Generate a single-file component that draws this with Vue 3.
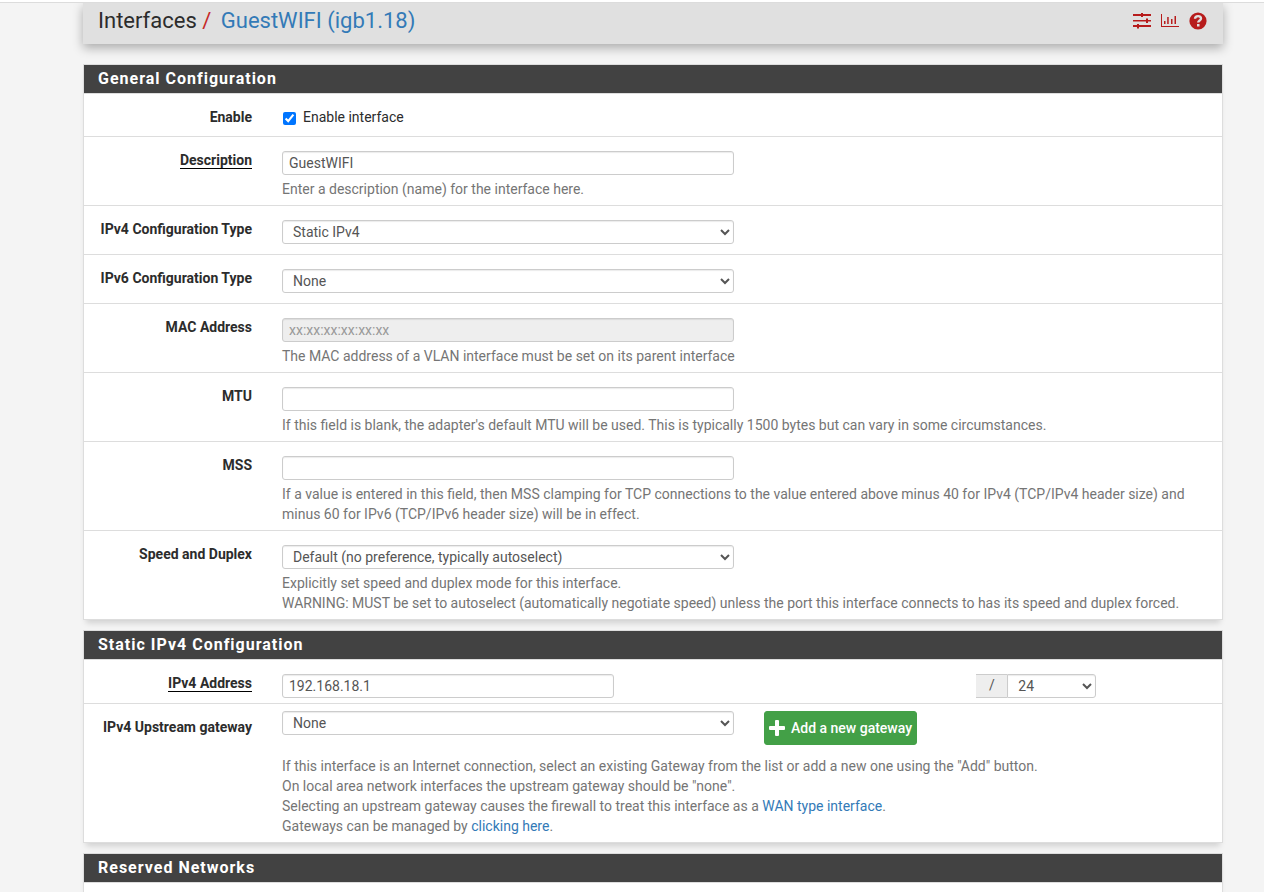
<script setup>
import { ref } from 'vue'

const enabled = ref(true)
const description = ref('GuestWIFI')
const ipv4Type = ref('Static IPv4')
const ipv6Type = ref('None')
const mtu = ref('')
const mss = ref('')
const speed = ref('Default (no preference, typically autoselect)')
const address = ref('192.168.18.1')
const prefix = ref('24')
const gateway = ref('None')
</script>

<template>
  <div class="page">
    <div class="topline"></div>
    <div class="container">
      <header class="page-header">
        <h1>Interfaces <span class="slash">/</span> <a href="#">GuestWIFI (igb1.18)</a></h1>
        <nav class="tools">
          <a href="#" aria-label="Related settings">
            <svg width="20" height="18" viewBox="0 0 20 18" fill="#b71c1c">
              <path d="M1 2h18v2H1zM1 8h18v1.500H1zM1 13h18v2H1z" />
              <rect x="9" y="1" width="2" height="4" />
              <rect x="14" y="6.500" width="2" height="4.500" />
              <rect x="5" y="12" width="2" height="4.500" />
            </svg>
          </a>
          <a href="#" aria-label="Related status">
            <svg width="20" height="18" viewBox="0 0 20 18" fill="#b71c1c">
              <path d="M1 2h1v12h17v1H1zM4 9h1.500v3H4zM7.200 5h1.500v7H7.200zM11 7h1.500v5H11zM14.500 4h1.500v8h-1.500z" />
            </svg>
          </a>
          <a href="#" aria-label="Help">
            <svg width="20" height="18" viewBox="0 0 20 18">
              <circle cx="10" cy="9" r="8.600" fill="#b71c1c" />
              <path d="M7 6.800c.2-3.700 6.200-3.400 6-.2 0 1.900-2.800 1.900-2.800 4" fill="none" stroke="#e0e0e0" stroke-width="2.400" />
              <rect x="9" y="12" width="2.500" height="2.500" fill="#e0e0e0" />
            </svg>
          </a>
        </nav>
      </header>

      <section class="panel">
        <h2>General Configuration</h2>
        <div class="body">
          <div class="row">
            <label class="name" for="enable">Enable</label>
            <div class="wide">
              <label class="choice"><input id="enable" v-model="enabled" type="checkbox" />Enable interface</label>
            </div>
          </div>
          <div class="row">
            <label class="name" for="descr"><span class="required">Description</span></label>
            <div class="wide">
              <input id="descr" v-model="description" class="control" type="text" />
              <p class="help">Enter a description (name) for the interface here.</p>
            </div>
          </div>
          <div class="row">
            <label class="name" for="type4">IPv4 Configuration Type</label>
            <div class="wide">
              <select id="type4" v-model="ipv4Type" class="control"><option>Static IPv4</option></select>
            </div>
          </div>
          <div class="row">
            <label class="name" for="type6">IPv6 Configuration Type</label>
            <div class="wide">
              <select id="type6" v-model="ipv6Type" class="control"><option>None</option></select>
            </div>
          </div>
          <div class="row">
            <label class="name" for="mac">MAC Address</label>
            <div class="wide">
              <input id="mac" class="control" type="text" placeholder="xx:xx:xx:xx:xx:xx" disabled />
              <p class="help">The MAC address of a VLAN interface must be set on its parent interface</p>
            </div>
          </div>
          <div class="row">
            <label class="name" for="mtu">MTU</label>
            <div class="wide">
              <input id="mtu" v-model="mtu" class="control" type="text" />
              <p class="help">If this field is blank, the adapter's default MTU will be used. This is typically 1500 bytes but can vary in some circumstances.</p>
            </div>
          </div>
          <div class="row">
            <label class="name" for="mss">MSS</label>
            <div class="wide">
              <input id="mss" v-model="mss" class="control" type="text" />
              <p class="help">If a value is entered in this field, then MSS clamping for TCP connections to the value entered above minus 40 for IPv4 (TCP/IPv4 header size) and minus 60 for IPv6 (TCP/IPv6 header size) will be in effect.</p>
            </div>
          </div>
          <div class="row">
            <label class="name" for="speed">Speed and Duplex</label>
            <div class="wide">
              <select id="speed" v-model="speed" class="control"><option>Default (no preference, typically autoselect)</option></select>
              <p class="help">Explicitly set speed and duplex mode for this interface.<br />WARNING: MUST be set to autoselect (automatically negotiate speed) unless the port this interface connects to has its speed and duplex forced.</p>
            </div>
          </div>
        </div>
      </section>

      <section class="panel">
        <h2>Static IPv4 Configuration</h2>
        <div class="body">
          <div class="row address-row">
            <label class="name" for="addr"><span class="required">IPv4 Address</span></label>
            <div class="wide">
              <div class="address">
                <input id="addr" v-model="address" class="control" type="text" />
                <div class="prefix">
                  <span class="addon">/</span>
                  <select v-model="prefix" class="control" aria-label="Prefix length"><option>24</option></select>
                </div>
              </div>
            </div>
          </div>
          <div class="row gateway-row">
            <label class="name" for="gw">IPv4 Upstream gateway</label>
            <div class="wide">
              <div class="gateway">
                <select id="gw" v-model="gateway" class="control"><option>None</option></select>
                <button type="button" class="add">
                  <svg width="16" height="16" viewBox="0 0 16 16" fill="#fff"><path d="M6 1q0-1 1-1h2q1 0 1 1v5h5q1 0 1 1v2q0 1-1 1h-5v5q0 1-1 1H7q-1 0-1-1v-5H1q-1 0-1-1V7q0-1 1-1h5z" /></svg>
                  Add a new gateway
                </button>
              </div>
              <p class="help">
                If this interface is an Internet connection, select an existing Gateway from the list or add a new one using the "Add" button.<br />
                On local area network interfaces the upstream gateway should be "none".<br />
                Selecting an upstream gateway causes the firewall to treat this interface as a <a href="#">WAN type interface</a>.<br />
                Gateways can be managed by <a href="#">clicking here</a>.
              </p>
            </div>
          </div>
        </div>
      </section>

      <section class="panel last">
        <h2>Reserved Networks</h2>
        <div class="body"></div>
      </section>
    </div>
  </div>
</template>

<style>
body {
  background: #f4f4f4;
}
</style>

<style scoped>
.page {
  display: flex;
  flex-direction: column;
  min-height: 100vh;
  color: #2c2c2c;
  font: 14px/20px Roboto, "Liberation Sans", sans-serif;
}
.page * {
  box-sizing: border-box;
}
.topline {
  height: 3px;
  background: #fff;
  border-bottom: 1px solid #dcdcdc;
}
.container {
  display: flex;
  flex: 1;
  flex-direction: column;
  padding: 0 41px 0 83px;
}
a {
  color: #337ab7;
  text-decoration: none;
}
.page-header {
  display: flex;
  justify-content: space-between;
  height: 41px;
  margin-bottom: 20px;
  padding: 4px 15px;
  background: #e0e0e0;
  box-shadow: 0 4px 10px rgba(0, 0, 0, 0.3);
  clip-path: inset(0 -20px -20px -20px);
}
h1 {
  margin: 0;
  font-size: 22px;
  font-weight: 400;
  line-height: 28px;
}
.slash {
  margin-right: 4px;
  color: #c62828;
}
.tools {
  display: flex;
  gap: 8px;
  padding-top: 5px;
}
.tools svg {
  display: block;
}
.panel {
  margin-bottom: 10px;
  background: #fff;
  border: 1px solid #ddd;
  box-shadow: 0 6px 6px -3px rgba(0, 0, 0, 0.15);
}
.last {
  flex: 1;
  margin-bottom: 0;
  border-bottom: 0;
}
h2 {
  margin: 0;
  padding: 4px 14px;
  border-bottom: 1px solid #ddd;
  background: #424242;
  background-clip: padding-box;
  color: #fff;
  font-size: 16px;
  font-weight: 700;
  line-height: 20px;
  letter-spacing: 1px;
}
.body {
  overflow: hidden;
}
.row {
  display: grid;
  grid-template-columns: repeat(12, 1fr);
  margin: 0 -10px;
  padding: 13px 0 6px;
  border-bottom: 1px solid #ddd;
}
.row:last-child {
  border-bottom: 0;
}
.name {
  grid-column: span 2;
  padding-right: 15px;
  font-weight: 700;
  text-align: right;
}
.required {
  display: inline-block;
  line-height: 16px;
  border-bottom: 1px solid #000;
}
.wide {
  grid-column: span 10;
  padding: 0 35px 0 15px;
}
.choice {
  display: flex;
  align-items: center;
  margin-bottom: 3px;
}
.choice input {
  width: 13px;
  height: 13px;
  margin: 2px 7px 0 1px;
}
.control {
  display: block;
  width: 452px;
  max-width: 100%;
  height: 24px;
  margin: 1px 0 4px;
  padding: 0 6px;
  border: 1px solid #ccc;
  border-radius: 3px;
  background: #fff;
  box-shadow: inset 0 1px 1px rgba(0, 0, 0, 0.08);
  color: #555;
  font: inherit;
}
.control:disabled {
  background: #eee;
}
.control::placeholder {
  color: #999;
}
.help {
  margin: 0;
  color: #757575;
}
.address-row {
  padding-bottom: 5px;
}
.address {
  display: flex;
  justify-content: space-between;
  width: 89%;
}
.address .control {
  width: 332px;
  margin-bottom: 0;
}
.prefix {
  display: flex;
}
.prefix .control {
  width: 89px;
  border-radius: 0 3px 3px 0;
}
.addon {
  width: 31px;
  height: 24px;
  margin-top: 1px;
  border-top: 1px solid #ccc;
  border-bottom: 1px solid #ccc;
  background: #eee;
  color: #555;
  text-align: center;
}
.gateway-row {
  padding-top: 7px;
}
.gateway-row .name {
  padding-top: 6px;
}
.gateway {
  display: flex;
  align-items: flex-start;
  gap: 30px;
  margin-bottom: 11px;
}
.gateway .control {
  margin: 0;
}
.add {
  display: flex;
  align-items: center;
  gap: 6px;
  height: 34px;
  padding: 0 4px;
  border: 1px solid #43a047;
  border-radius: 3px;
  background: #43a047;
  color: #fff;
  font: 500 14px/20px Roboto, "Liberation Sans", sans-serif;
}
</style>
